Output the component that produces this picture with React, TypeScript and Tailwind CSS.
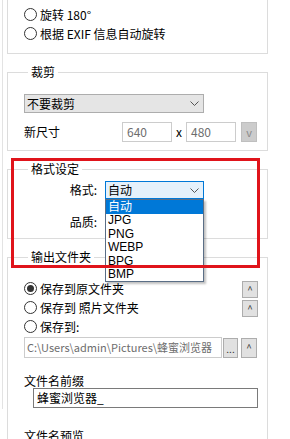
import React from "react";

type TGroupProps = {
  title?: string;
  className?: string;
  children: React.ReactNode;
};

function Group({ title, className = "", children }: TGroupProps) {
  return (
    <fieldset className={`w-[261px] border border-[#dcdcdc] ${className}`}>
      {title && <legend className="ml-[4px] px-[3px] leading-[16px]">{title}</legend>}
      {children}
    </fieldset>
  );
}

function Radio({ label, checked }: { label: React.ReactNode; checked?: boolean }) {
  return (
    <div className="flex h-[19px] items-center gap-[3px]">
      <span className="flex h-[13px] w-[13px] items-center justify-center rounded-full border border-[#333] bg-white">
        {checked && <span className="h-[7px] w-[7px] rounded-full bg-[#333]" />}
      </span>
      <span className="leading-[16px]">{label}</span>
    </div>
  );
}

function Chevron() {
  return (
    <svg width="9" height="5" viewBox="0 0 9 5">
      <path d="M0.5 0.5 L4.5 4.5 L8.5 0.5" fill="none" stroke="#555" strokeWidth="1" />
    </svg>
  );
}

function SpinBtn({ h = "h-[17px]", children }: { h?: string; children: React.ReactNode }) {
  return (
    <div
      className={`flex w-[16px] ${h} items-center justify-center border border-[#adadad] bg-[#e1e1e1] text-[10px] leading-none text-[#333]`}
    >
      {children}
    </div>
  );
}

export default function App() {
  // heights alternate so the list lands on 199..282 like the reference
  const formats = [
    { name: "自动", h: "h-[14px] leading-[14px]" },
    { name: "JPG", h: "h-[13px] leading-[13px]" },
    { name: "PNG", h: "h-[14px] leading-[14px]" },
    { name: "WEBP", h: "h-[13px] leading-[13px]" },
    { name: "BPG", h: "h-[14px] leading-[14px]" },
    { name: "BMP", h: "h-[13px] leading-[13px]" },
  ];

  return (
    <div className="relative h-[439px] w-[290px] overflow-hidden bg-white text-[12px] text-black font-['Noto_Sans_CJK_SC','Microsoft_YaHei',sans-serif]">
      <div className="ml-[2px] h-full border-l border-[#e3e3e3] pl-[4px]">
        {/* rotation (top is scrolled off) */}
        <Group className="-mt-[30px] pt-[34px] pb-[10px] pl-[16px]">
          <Radio label="旋转 180°" />
          <Radio label="根据 EXIF 信息自动旋转" />
        </Group>

        <Group title="裁剪" className="mt-[10px] pb-[8px] pl-[16px]">
          <div className="mt-[14px] flex h-[19px] w-[180px] items-center justify-between border border-[#adadad] bg-[#e5e5e5] pl-[2px] pr-[4px] leading-[16px]">
            <span>不要裁剪</span>
            <Chevron />
          </div>
          <div className="mt-[9px] flex h-[20px] items-center">
            <span className="w-[98px] leading-[16px]">新尺寸</span>
            <div className="flex h-[20px] w-[50px] items-center border border-[#cccccc] pl-[4px] text-[#6d6d6d]">
              640
            </div>
            <span className="w-[14px] text-center">x</span>
            <div className="flex h-[20px] w-[50px] items-center border border-[#cccccc] pl-[4px] text-[#6d6d6d]">
              480
            </div>
            <div className="ml-[5px] flex h-[20px] w-[16px] items-center justify-center border border-[#bfbfbf] bg-[#cccccc] text-[11px] text-[#8a8a8a]">
              v
            </div>
          </div>
        </Group>

        <Group title="格式设定" className="mt-[10px] pb-[7px] pl-[16px]">
          <div className="mt-[4px] flex h-[18px] items-center gap-[8px]">
            <span className="w-[73px] text-right leading-[16px]">格式:</span>
            <div className="flex h-[18px] w-[99px] items-center justify-between border border-[#0078d7] bg-[#e5f1fb] pl-[2px] pr-[4px] leading-[16px]">
              <span>自动</span>
              <Chevron />
            </div>
          </div>
          <div className="mt-[14px] flex h-[18px] items-center gap-[8px]">
            <span className="w-[73px] text-right leading-[16px]">品质:</span>
          </div>
        </Group>

        <Group title="输出文件夹" className="mt-[10px] pb-[10px] pl-[16px] pr-[9px]">
          <div className="mt-[14px] flex justify-between">
            <div className="flex flex-col">
              <Radio label="保存到原文件夹" checked />
              <Radio label="保存到 照片文件夹" />
              <Radio label="保存到:" />
            </div>
            <div className="mt-[2px] flex flex-col gap-[2px]">
              <SpinBtn>^</SpinBtn>
              <SpinBtn>^</SpinBtn>
            </div>
          </div>
          <div className="mt-[1px] flex items-center">
            <div className="flex h-[21px] w-[198px] items-center whitespace-nowrap border border-[#cccccc] pl-[2px] text-[11px] text-[#6d6d6d]">
              C:\Users\admin\Pictures\蜂蜜浏览器
            </div>
            <div className="ml-[1px] flex h-[20px] w-[15px] items-end justify-center border border-[#adadad] bg-[#e1e1e1] pb-[3px] text-[10px] leading-none text-[#333]">
              ...
            </div>
            <div className="ml-[3px]">
              <SpinBtn h="h-[20px]">^</SpinBtn>
            </div>
          </div>
          <div className="mt-[15px] leading-[15px]">文件名前缀</div>
          <div className="ml-[9px] flex h-[20px] w-[225px] items-center border border-[#7a7a7a] pl-[3px] leading-[16px]">
            蜂蜜浏览器_
          </div>
          <div className="mt-[20px] leading-[16px]">文件名预览</div>
          <div className="h-[40px]" />
        </Group>
      </div>

      {/* open format dropdown */}
      <div className="absolute left-[105px] top-[199px] w-[99px] border border-[#5a6e86] bg-white font-['Liberation_Sans','Noto_Sans_CJK_SC',sans-serif] shadow-[2px_2px_2px_rgba(0,0,0,0.25)]">
        {formats.map((f, i) => (
          <div
            key={f.name}
            className={`${f.h} pl-[2px] ${i === 0 ? "bg-[#0078d7] text-white" : ""}`}
          >
            {f.name}
          </div>
        ))}
      </div>

      {/* red annotation box */}
      <div className="absolute left-[11px] top-[158px] h-[110px] w-[249px] border-[3px] border-[#e0141b]" />
    </div>
  );
}
